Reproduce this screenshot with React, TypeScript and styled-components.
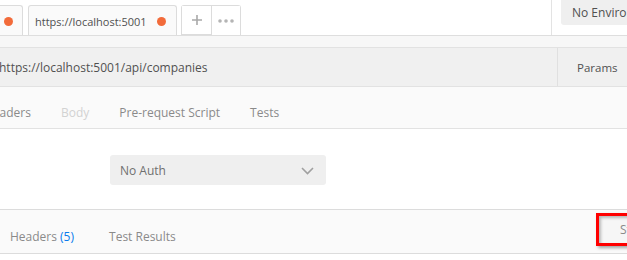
import React from 'react';
import styled, { createGlobalStyle } from 'styled-components';

const GlobalStyle = createGlobalStyle`
  html, body {
    margin: 0;
    padding: 0;
    background: #ffffff;
    overflow: hidden;
  }
  body {
    font-family: "Open Sans", "Liberation Sans", sans-serif;
    font-size: 12px;
    color: #505050;
  }
`;

const Page = styled.div`
  width: 627px;
  height: 260px;
  overflow: hidden;
  display: flex;
  flex-direction: column;
`;

const TabBar = styled.div`
  height: 35px;
  display: flex;
  align-items: flex-end;
  border-bottom: 1px solid #dedede;
  background: #ffffff;
`;

const Tab = styled.div<{ $partial?: boolean }>`
  height: 30px;
  display: flex;
  align-items: center;
  justify-content: space-between;
  box-sizing: border-box;
  background: #fafafa;
  border: 1px solid #dcdcdc;
  border-bottom: none;
  border-radius: ${(p) => (p.$partial ? '0 3px 0 0' : '3px 3px 0 0')};
  border-left: ${(p) => (p.$partial ? 'none' : '1px solid #dcdcdc')};
  width: ${(p) => (p.$partial ? '23px' : '149px')};
  margin-left: ${(p) => (p.$partial ? '0' : '5px')};
  padding: ${(p) => (p.$partial ? '1px 0 0 4px' : '1px 10px 0 6px')};
  color: #505050;
  font-size: 11px;
`;

const Dot = styled.span`
  width: 9px;
  height: 9px;
  border-radius: 50%;
  background: #f26b3a;
  flex: none;
`;

const TabTitle = styled.span`
  white-space: nowrap;
`;

const TabButtons = styled.div`
  display: flex;
  height: 30px;
  margin-left: 4px;
  box-sizing: border-box;
  border: 1px solid #dcdcdc;
  border-bottom: none;
  border-radius: 3px 3px 0 0;
`;

const TabButton = styled.div<{ $first?: boolean }>`
  width: ${(p) => (p.$first ? '30px' : '28px')};
  display: flex;
  align-items: center;
  justify-content: center;
  color: #a9a9a9;
  border-right: ${(p) => (p.$first ? '1px solid #dcdcdc' : 'none')};
  border-bottom: ${(p) => (p.$first ? '1px solid #dcdcdc' : 'none')};
  box-sizing: border-box;
  background: #ffffff;
`;

const Spacer = styled.div`
  flex: 1;
`;

const EnvArea = styled.div`
  align-self: stretch;
  width: 66px;
  border-left: 1px solid #e3e3e3;
  padding-left: 9px;
`;

const EnvSelect = styled.div`
  height: 25px;
  background: #efefef;
  border-radius: 0 0 0 3px;
  display: flex;
  align-items: center;
  padding-left: 11px;
  white-space: nowrap;
  overflow: hidden;
  color: #505050;
  font-size: 12px;
`;

const Strip = styled.div`
  height: 11px;
  background: #f7f7f7;
  border-bottom: 1px solid #e2e2e2;
`;

const UrlRow = styled.div`
  height: 38px;
  display: flex;
  background: #f0f0f0;
  border-bottom: 1px solid #e2e2e2;
`;

const UrlText = styled.div`
  flex: 1;
  display: flex;
  align-items: center;
  margin-left: -1px;
  font-size: 12px;
  color: #505050;
  white-space: nowrap;
`;

const ParamsButton = styled.div`
  width: 70px;
  box-sizing: border-box;
  border-left: 1px solid #e0e0e0;
  display: flex;
  align-items: center;
  padding-left: 19px;
  font-size: 11.5px;
  color: #505050;
`;

const RequestTabs = styled.div`
  height: 42px;
  box-sizing: border-box;
  padding-top: 9px;
  display: flex;
  align-items: center;
  background: #fafafa;
  border-bottom: 1px solid #e2e2e2;
  overflow: hidden;
`;

const NavList = styled.div<{ $offset: number }>`
  display: flex;
  align-items: center;
  margin-left: ${(p) => p.$offset}px;
  white-space: nowrap;
`;

const NavItem = styled.span<{ $disabled?: boolean; $pad?: number }>`
  padding: 0 ${(p) => p.$pad ?? 15}px;
  font-size: 12px;
  color: ${(p) => (p.$disabled ? '#d2d2d2' : '#8a8a8a')};
`;

const Count = styled.span`
  color: #097bed;
`;

const AuthArea = styled.div`
  height: 81px;
  background: #ffffff;
  border-bottom: 1px solid #dcdcdc;
  display: flex;
  align-items: flex-start;
  padding: 26px 0 0 110px;
  box-sizing: border-box;
`;

const Select = styled.div`
  width: 216px;
  height: 30px;
  background: #efefef;
  border-radius: 3px;
  display: flex;
  align-items: center;
  justify-content: space-between;
  padding: 1px 12px 0 10px;
  box-sizing: border-box;
  font-size: 12px;
  color: #707070;
`;

const ResponseBar = styled.div`
  height: 44px;
  box-sizing: border-box;
  padding-top: 10px;
  background: #fafafa;
  border-bottom: 1px solid #dcdcdc;
  display: flex;
  align-items: center;
  overflow: hidden;
`;

const StatusBox = styled.div`
  align-self: flex-start;
  margin-top: -7px;
  margin-left: auto;
  margin-right: -12px;
  width: 43px;
  height: 33px;
  box-sizing: border-box;
  border: 3px solid #ff0000;
  background: #f6f6f6;
  box-shadow: inset 2px 2px 3px rgba(0, 0, 0, 0.25), 2px 2px 3px rgba(0, 0, 0, 0.35);
  display: flex;
  align-items: center;
  padding-left: 21px;
  font-size: 12px;
  color: #8a8a8a;
  white-space: nowrap;
  overflow: hidden;
`;

const Chevron = () => (
  <svg width="13" height="8" viewBox="0 0 13 8">
    <path d="M1 1 L6.5 6.5 L12 1" fill="none" stroke="#a0a0a0" strokeWidth="1.6" />
  </svg>
);

const App = () => {
  return (
    <Page>
      <GlobalStyle />
      <TabBar>
        <Tab $partial>
          <Dot />
        </Tab>
        <Tab>
          <TabTitle>https://localhost:5001</TabTitle>
          <Dot />
        </Tab>
        <TabButtons>
          <TabButton $first>
            <svg width="10" height="10" viewBox="0 0 10 10">
              <path d="M5 0 V10 M0 5 H10" stroke="#a9a9a9" strokeWidth="1.6" />
            </svg>
          </TabButton>
          <TabButton>
            <svg width="16" height="4" viewBox="0 0 16 4">
              <circle cx="2" cy="2" r="1.8" fill="#b4b4b4" />
              <circle cx="8" cy="2" r="1.8" fill="#b4b4b4" />
              <circle cx="14" cy="2" r="1.8" fill="#b4b4b4" />
            </svg>
          </TabButton>
        </TabButtons>
        <Spacer />
        <EnvArea>
          <EnvSelect>No Environment</EnvSelect>
        </EnvArea>
      </TabBar>
      <Strip />
      <UrlRow>
        <UrlText>https://localhost:5001/api/companies</UrlText>
        <ParamsButton>Params</ParamsButton>
      </UrlRow>
      <RequestTabs>
        <NavList $offset={-31}>
          <NavItem>Headers</NavItem>
          <NavItem $disabled>Body</NavItem>
          <NavItem>Pre-request Script</NavItem>
          <NavItem>Tests</NavItem>
        </NavList>
      </RequestTabs>
      <AuthArea>
        <Select>
          <span>No Auth</span>
          <Chevron />
        </Select>
      </AuthArea>
      <ResponseBar>
        <NavList $offset={0}>
          <NavItem $pad={10}>
            Headers <Count>(5)</Count>
          </NavItem>
          <NavItem $pad={25}>Test Results</NavItem>
        </NavList>
        <StatusBox>Status</StatusBox>
      </ResponseBar>
    </Page>
  );
};

export default App;
